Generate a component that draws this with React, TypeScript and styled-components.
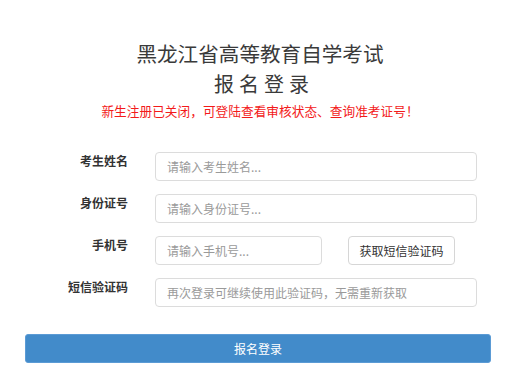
import React from "react";
import styled, { createGlobalStyle } from "styled-components";

const GlobalStyle = createGlobalStyle`
  html, body {
    margin: 0;
    padding: 0;
    background: #fff;
  }
  body {
    font-family: "Noto Sans CJK SC", "Liberation Sans", sans-serif;
    color: #333;
  }
  * { box-sizing: border-box; }
`;

const Page = styled.div`
  width: 520px;
  height: 379px;
  overflow: hidden;
  padding-top: 41px;
`;

const Header = styled.header`
  display: flex;
  flex-direction: column;
  align-items: center;
`;

const Title = styled.h1`
  margin: 0;
  font-size: 20.6px;
  line-height: 24px;
  font-weight: 400;
  color: #3a3a3a;
  padding-left: 0;
`;

const SubTitle = styled.h2`
  margin: 7px 0 0;
  font-size: 20px;
  line-height: 24px;
  font-weight: 400;
  letter-spacing: 5px;
  color: #3a3a3a;
  padding-left: 8px;
`;

const Notice = styled.p`
  margin: 7px 0 0;
  font-size: 12.7px;
  line-height: 16px;
  color: #f31a1a;
`;

const Form = styled.form`
  margin-top: 33px;
  display: grid;
  grid-template-columns: 128px 1fr;
  column-gap: 27px;
  row-gap: 13px;
  padding-right: 43px;
`;

const Label = styled.label`
  text-align: right;
  font-size: 12px;
  line-height: 16px;
  font-weight: 700;
  color: #333;
  padding-top: 1px;
`;

const Field = styled.div`
  display: flex;
  gap: 26px;
  align-items: center;
`;

const Input = styled.input<{ $w?: number }>`
  height: 29px;
  width: ${(p) => (p.$w ? `${p.$w}px` : "100%")};
  flex: ${(p) => (p.$w ? "none" : "1")};
  border: 1px solid #dcdcdc;
  border-radius: 4px;
  padding: 0 11px;
  font-family: inherit;
  font-size: 12px;
  color: #333;
  outline: none;
  &::placeholder {
    color: #9a9a9a;
  }
`;

const CodeButton = styled.button`
  height: 29px;
  width: 107px;
  border: 1px solid #d6d6d6;
  border-radius: 4px;
  background: #fff;
  font-family: inherit;
  font-size: 12px;
  color: #333;
  padding: 0;
`;

const Footer = styled.div`
  margin-top: 27px;
  padding: 0 29px 0 25px;
`;

const Submit = styled.button`
  width: 100%;
  height: 29px;
  border: 1px solid #5b9bd5;
  border-radius: 3px;
  background: #428bca;
  color: #fff;
  font-family: inherit;
  font-size: 12px;
  padding: 0;
`;

export default function App() {
  return (
    <Page>
      <GlobalStyle />
      <Header>
        <Title>黑龙江省高等教育自学考试</Title>
        <SubTitle>报名登录</SubTitle>
        <Notice>新生注册已关闭，可登陆查看审核状态、查询准考证号！</Notice>
      </Header>
      <Form onSubmit={(e) => e.preventDefault()}>
        <Label>考生姓名</Label>
        <Field>
          <Input placeholder="请输入考生姓名..." />
        </Field>
        <Label>身份证号</Label>
        <Field>
          <Input placeholder="请输入身份证号..." />
        </Field>
        <Label>手机号</Label>
        <Field>
          <Input $w={167} placeholder="请输入手机号..." />
          <CodeButton type="button">获取短信验证码</CodeButton>
        </Field>
        <Label>短信验证码</Label>
        <Field>
          <Input placeholder="再次登录可继续使用此验证码，无需重新获取" />
        </Field>
      </Form>
      <Footer>
        <Submit type="button">报名登录</Submit>
      </Footer>
    </Page>
  );
}
